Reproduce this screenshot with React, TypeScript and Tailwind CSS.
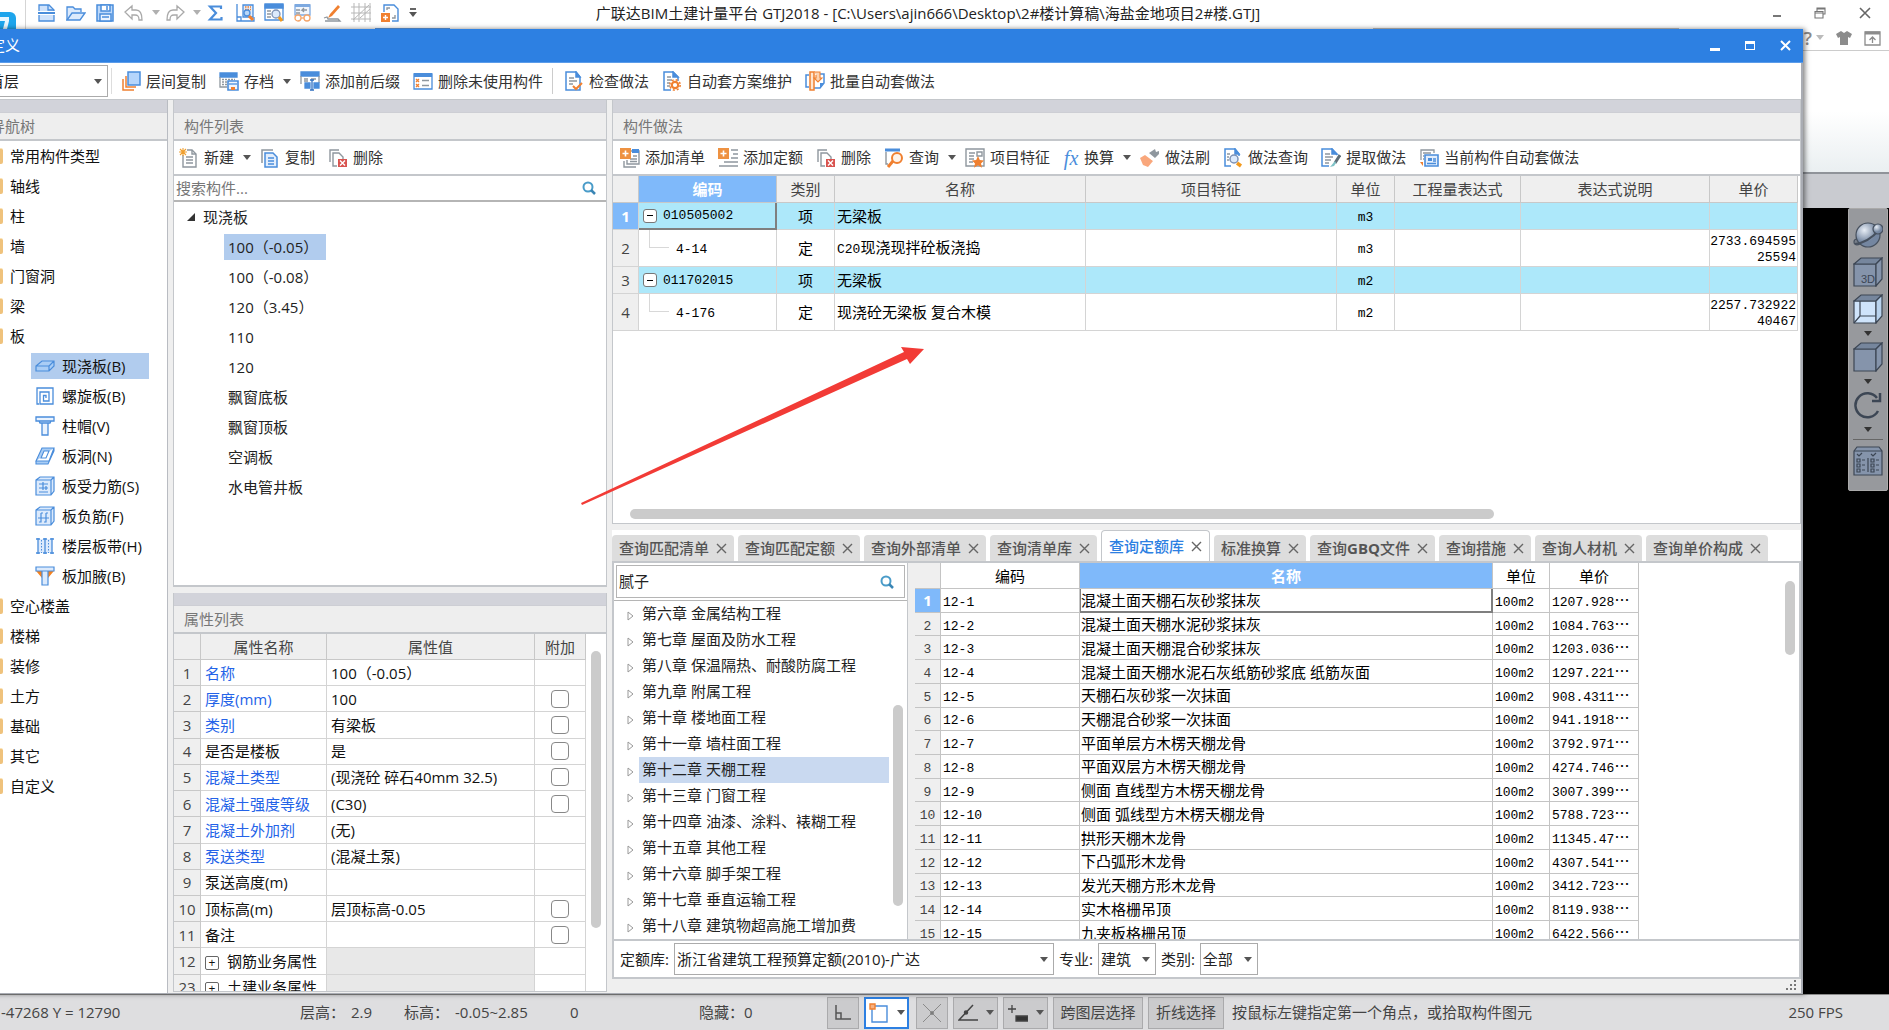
import { type ReactNode } from 'react'
import clsx from 'clsx'

const B = '#4a8ddb'
const O = '#f08030'
const G = '#8f979e'

// toolbar drawings, all on a 20x20 grid
const icons: Record<string, ReactNode> = {
  newFile: (
    <g fill="#cfe2fb" stroke={B} strokeWidth="1.3">
      <path d="M2 8V2h10l5 5v1" />
      <path d="M2 12v6h15v-6" />
      <path d="M1 10h17" strokeWidth="2" />
      <path d="M11 2v5h6" fill="none" />
    </g>
  ),
  open: (
    <g fill="#dceafc" stroke={B} strokeWidth="1.3">
      <path d="M1 17V4h6l2 2h6v3" />
      <path d="M1 17l5-7h13l-5 7z" />
    </g>
  ),
  save: (
    <g fill="#bcd8fa" stroke={B} strokeWidth="1.5">
      <path d="M2 2h16v16H2z" />
      <path d="M6 2h9v6H6z" fill="#fff" />
      <path d="M5 11h11v7H5z" fill="#eaf3fe" />
      <path d="M7 14h7M12 3v4" />
    </g>
  ),
  undo: <path d="M8 3v4h4c4 0 6 3 6 10h-3c0-4-1-5-4-5H8v4L1 9z" fill="#fff" stroke="#a9a9a9" strokeWidth="1.3" />,
  redo: <path d="M12 3v4H8c-4 0-6 3-6 10h3c0-4 1-5 4-5h3v4l7-7z" fill="#fff" stroke="#a9a9a9" strokeWidth="1.3" />,
  sigma: <path d="M15 6V3.500H4L10 10l-6 6.500h11.500V14" fill="none" stroke={B} strokeWidth="2.200" />,
  calc: (
    <g fill="none" stroke={B} strokeWidth="1.3">
      <path d="M2 1v17h17v-4M2 14h4v4" />
      <path d="M8 2h10v12H8z" fill="#e3eefc" />
      <path d="M10 4h6M10 6.500h6" stroke={O} strokeDasharray="1.500 1" />
      <circle cx="12" cy="10" r="3" fill="#b9d7f8" />
      <path d="M14 13l4 4" stroke={O} strokeWidth="3" />
    </g>
  ),
  findTable: (
    <g fill="none" stroke={B} strokeWidth="1.3">
      <path d="M1 2h18v15H1z" fill="#fff" />
      <path d="M1 1h18v4H1z" fill={B} />
      <path d="M3 8h4M3 11h4M3 14h4" stroke={G} />
      <circle cx="12" cy="11" r="4" fill="#dceafc" stroke="#7d92b5" />
      <path d="M15 14l3 4" stroke="#f39a1e" strokeWidth="3" />
    </g>
  ),
  glasses: (
    <g fill="none" stroke="#7da9e0" strokeWidth="1.3">
      <path d="M2 2h15v10H2z" fill="#f1f6fd" />
      <path d="M2 2.500h15" strokeWidth="3" />
      <path d="M3 7h4M3 10h4M14 7h-5l2-2M9 7l2 2" stroke={G} />
      <circle cx="5" cy="15" r="3" stroke="#f4a56a" fill="#fff" />
      <circle cx="14" cy="15" r="3" stroke="#f4a56a" fill="#fff" />
      <path d="M8 15h3" stroke="#f4a56a" />
    </g>
  ),
  pencil: (
    <g>
      <path d="M16 2l2 2-8 9-4 2 2-4z" fill={O} />
      <path d="M2 15l3-1 1 2h10l2 2H3" fill="none" stroke={G} strokeWidth="1.300" />
    </g>
  ),
  gridAxes: (
    <path d="M3 0v19M8 0v19M14 0v19M19 0v19M0 4h20M0 10h20M0 16h20M2 17L18 2M9 15L19 6" fill="none" stroke="#b7b7b7" />
  ),
  addPage: (
    <g fill="none" stroke={B} strokeWidth="1.4">
      <path d="M4 9V2h10l4 4v12h-6" fill="#fff" />
      <path d="M7 7V5h3M15 12v3h-3" stroke={G} />
      <path d="M1 10h9v9H1z" fill={O} stroke="none" />
      <path d="M5.500 12v5M3 14.500h5" stroke="#fff" />
    </g>
  ),
  layers: (
    <g fill="none" strokeWidth="1.5">
      <path d="M2 8v11h11M5 5v11h10" stroke={O} />
      <path d="M7 1h12v13H7z" fill="#b5d5fb" stroke={B} />
    </g>
  ),
  archive: (
    <g fill="none" stroke={B} strokeWidth="1.3">
      <path d="M1 2h17v4H1z" fill={B} />
      <path d="M1 6v10h7" stroke={G} />
      <path d="M3 8.500h13M3 11h5M3 13.500h5" stroke={G} strokeDasharray="2 1" />
      <path d="M9 10h10v9H9z" fill="#eef5fe" strokeWidth="1.600" />
      <path d="M12 16h4v3h-4z" fill={O} stroke="none" />
      <path d="M10 13h8" />
    </g>
  ),
  prefix: (
    <g fill="none" stroke={B} strokeWidth="1.3">
      <path d="M1 1h18v4H1z" fill={B} />
      <path d="M1 5v8M19 5v7M4 8h4M11 8h5M4 10h4" stroke={G} />
      <path d="M5 12h5v5H5zM14 12h5v5h-5z" fill={B} />
      <path d="M12 9v10M10 9h4M10 19h4" stroke="#2f6fc0" />
    </g>
  ),
  unused: (
    <g fill="none" strokeWidth="1.3">
      <path d="M1 3h18v15H1z" fill="#fff" stroke={B} />
      <path d="M1 2h18v4H1z" fill={B} />
      <path d="M3 8l3 3M6 8l-3 3M3 13l3 3M6 13l-3 3" stroke={O} />
      <path d="M9 9.500h7M9 14.500h7" stroke={G} />
    </g>
  ),
  check: (
    <g fill="none" stroke={B} strokeWidth="1.5">
      <path d="M2 1h10l4 5v13H2z" fill="#fff" />
      <path d="M12 1v5h4z" fill={B} />
      <path d="M5 7h5M5 10h8M5 13h4" stroke={G} />
      <path d="M9 15l3 3 6-6" stroke={O} strokeWidth="2" />
    </g>
  ),
  gearPage: (
    <g fill="none" stroke={B} strokeWidth="1.5">
      <path d="M9 19H2V1h9l5 5v4" fill="#fff" />
      <path d="M11 1v5h5z" fill={B} />
      <path d="M5 6h4M5 9h5M5 12h3M5 15h3" stroke={G} />
      <circle cx="13" cy="14" r="3.200" stroke={O} strokeWidth="2.200" />
      <circle cx="13" cy="14" r="5.200" stroke={O} strokeDasharray="2 2.100" />
    </g>
  ),
  batch: (
    <g fill="none" strokeWidth="1.5">
      <path d="M4 4H1v12h3M15 3h4v9l-4 5H9" stroke={B} />
      <path d="M5 1h4v18H5z" fill="#fde6d2" stroke={O} />
      <path d="M9 1h6v6h2l-4 4-4-4h2V4" fill="#fbd3b2" stroke={O} strokeWidth="1.100" />
      <path d="M15 17v-5h4z" fill={B} />
    </g>
  ),
  create: (
    <g fill="none" stroke={G} strokeWidth="1.4">
      <path d="M4 7v12h13V6l-4-4H8" fill="#fff" />
      <path d="M13 2v4h4M7 9h7M7 12h7M7 15h7" />
      <path d="M1 1l6 6M7 1L1 7M4 0v8M0 4h8" stroke="#f0a030" strokeWidth="1.100" />
    </g>
  ),
  copy: (
    <g fill="none" strokeWidth="1.5">
      <path d="M2 15V2h11" stroke={G} />
      <path d="M5 5h8l4 4v10H5z" fill="#e3eefc" stroke={B} />
      <path d="M8 10h6M8 13h6M8 16h6" stroke={B} />
    </g>
  ),
  remove: (
    <g fill="none" stroke={G} strokeWidth="1.4">
      <path d="M2 14V2h9" />
      <path d="M9 18H5V5h6l4 4v2" fill="#fff" />
      <path d="M10 11h9v8h-9z" fill="#d9534f" stroke="none" />
      <path d="M12 12.500l5 5M17 12.500l-5 5" stroke="#fff" />
    </g>
  ),
  addList: (
    <g fill="none" stroke={G} strokeWidth="1.4">
      <path d="M10 3h9v13H7v-4" />
      <path d="M12 3h7" stroke={B} strokeWidth="4" />
      <path d="M13 8h4M10 11h7M10 13.500h7M4 13v6h12" />
      <path d="M0 0h11v11H0z" fill="#ee9242" stroke="none" />
      <path d="M5.500 2.500v6M2.500 5.500h6" stroke="#fff" strokeWidth="1.600" />
    </g>
  ),
  addQuota: (
    <g fill="none" stroke={G} strokeWidth="1.5">
      <path d="M13 2h7M15 6h5M13 10h7M6 14h14M1 18h19" />
      <path d="M0 0h11v11H0z" fill="#ee9242" stroke="none" />
      <path d="M5.500 2.500v6M2.500 5.500h6" stroke="#fff" strokeWidth="1.600" />
    </g>
  ),
  query: (
    <g fill="none">
      <path d="M1 2h15" stroke={B} strokeWidth="3" />
      <path d="M2 4v12h2" stroke={G} strokeWidth="1.400" />
      <circle cx="13" cy="10" r="5" stroke={O} strokeWidth="2" fill="#fff4ea" />
      <path d="M9 13l-5 6" stroke={O} strokeWidth="3" />
    </g>
  ),
  feature: (
    <g fill="none" stroke={G} strokeWidth="1.4">
      <path d="M1 1h18v17H1z" fill="#fff" />
      <path d="M4 5h6M4 8h5M4 11h5M4 14h4M12 4h5v4h-5z" />
      <path d="M13 8l1.800 4 4.200.4-3 3 1 4.300-4-2.400-4 2.400 1-4.300-3-3 4.200-.4z" fill={O} stroke="none" />
    </g>
  ),
  brush: (
    <g>
      <path d="M0 10l5-3 8 6-5 6-5-2z" fill="#f9a77c" />
      <path d="M9 5l6 5 4-4V3l-3 1-1-3z" fill={G} />
      <path d="M6 6l7 6" stroke="#fff" strokeWidth="1.300" />
    </g>
  ),
  findPage: (
    <g fill="none" stroke={B} strokeWidth="1.5">
      <path d="M16 8V6l-4-5H2v17h6" fill="#fff" />
      <path d="M12 1v5h4z" fill={B} />
      <circle cx="11" cy="11" r="4" fill="#dceafc" stroke="#7d92b5" />
      <path d="M4 6h3M4 9h2M4 12h2" stroke={G} />
      <path d="M14 15l4 3" stroke="#f39a1e" strokeWidth="3.500" />
    </g>
  ),
  extract: (
    <g fill="none" stroke={B} strokeWidth="1.5">
      <path d="M8 18H1V1h10l5 6" fill="#fff" />
      <path d="M11 1v5h5z" fill={B} />
      <path d="M4 6h5M4 9h8M4 12h6M4 15h4" stroke={G} />
      <path d="M19 7l-5 8" stroke="#5e6e78" strokeWidth="3" />
      <path d="M14 13l-5 6 4-1 2-3z" fill="#7fc2c7" stroke="none" />
    </g>
  ),
  current: (
    <g fill="none" stroke={G} strokeWidth="1.3">
      <path d="M2 12V2h13v3M4 5h8M4 8h1M4 11h1" />
      <path d="M1 14h3v4z" fill={O} stroke="none" />
      <path d="M6 7h13v11H6z" fill="#e3eefc" stroke={B} strokeWidth="1.600" />
      <path d="M9 10h4v3H9z" fill={B} stroke="none" />
      <path d="M14 11h3M14 13h3M8 15.500h9" stroke={B} />
    </g>
  ),
  slab: <path d="M1 10l6-5h12v5l-5 5H1zM1 10h13v5M14 10l5-5" fill="#a9cdf5" stroke={B} strokeWidth="1.200" />,
  spiral: <path d="M4 18H2V2h16v16H5V6h9v9H8.500V9.500H11V12" fill="none" stroke={B} strokeWidth="1.300" />,
  cap: <path d="M1 1h18v4H1zM4 5h12l-1 2H5zM7 7h6v12H7z" fill="#eaf3fe" stroke={B} strokeWidth="1.300" />,
  hole: (
    <g stroke={B} strokeWidth="1.1">
      <path d="M7 2h12l-5 13H1zM1 15v3h12l6-13V2" fill="#a9cdf5" />
      <path d="M9 5h5l-3 7H6z" fill="#fff" />
    </g>
  ),
  rebarS: (
    <g fill="#dceafc" stroke={B} strokeWidth="1.2">
      <path d="M1 4l4-3h14v14l-3 4H1zM1 4h15v15M16 4l3-3" />
      <path d="M4 8h9M4 12h9M4 16h9M8 6v4M8 10v4M11 10v4" />
    </g>
  ),
  rebarF: (
    <g fill="#dceafc" stroke={B} strokeWidth="1.2">
      <path d="M1 4l4-3h14v14l-3 4H1zM1 4h15v15M16 4l3-3" />
      <path d="M6 7v9H4M11 7v9H9M3 12h11M6 7h2M11 7h2" fill="none" />
    </g>
  ),
  strip: (
    <g>
      <path d="M3 3h14v14H3z" fill="#dceafc" />
      <path d="M3 2v16M10 2v16M17 2v16M1 3h4M1 17h4M8 3h4M8 17h4M15 3h4M15 17h4" stroke={B} strokeWidth="1.300" />
      <path d="M6.500 4v13M13.500 4v13" stroke={B} strokeDasharray="1.500 1.500" />
    </g>
  ),
  haunch: (
    <g strokeWidth="1.2">
      <path d="M2 5l5 6V5zM18 5l-5 6V5z" fill="#f58220" stroke="#f58220" />
      <path d="M1 1h18v4H1zM7 5h6v14H7z" fill="#dceafc" stroke={B} />
    </g>
  ),
}

const Icon = ({ name, className = 'size-5' }: { name: string; className?: string }) => (
  <svg viewBox="0 0 20 20" className={clsx('shrink-0', className)} aria-hidden="true">
    {icons[name]}
  </svg>
)

const Caret = ({ className = 'text-[#555]' }: { className?: string }) => (
  <svg viewBox="0 0 8 5" className={clsx('h-[5px] w-2 shrink-0', className)} aria-hidden="true">
    <path d="M0 0h8L4 5z" fill="currentColor" />
  </svg>
)

const SearchIcon = () => (
  <svg viewBox="0 0 14 14" className="size-3.5 shrink-0" aria-hidden="true">
    <circle cx="6" cy="6" r="4.500" fill="none" stroke="#4a9cc9" strokeWidth="2" />
    <path d="M9 9l4 4" stroke="#3a86b5" strokeWidth="2.500" />
  </svg>
)

const ToolButton = ({ icon, label, menu }: { icon: string; label: string; menu?: boolean }) => (
  <button type="button" className={clsx('flex items-center gap-[5px] whitespace-nowrap', menu && '-mr-1')}>
    {icon === 'fx' ? (
      <span className="w-4 font-['Liberation_Serif',serif] text-[20px] leading-5 text-[#4a8ddb] italic">fx</span>
    ) : (
      <Icon name={icon} />
    )}
    {label}
    {menu && <span className="ml-1"><Caret /></span>}
  </button>
)

type SelectProps = { id: string; label: string; value: string; className: string; pad?: string }

const Select = ({ id, label, value, className, pad = 'pl-0.5' }: SelectProps) => (
  <div className={clsx('relative', className)}>
    <select
      id={id}
      aria-label={label}
      className={clsx('h-full w-full appearance-none border border-[#ababab] bg-white text-[15px] text-[#222] outline-none', pad)}
    >
      <option>{value}</option>
    </select>
    <span className="pointer-events-none absolute inset-y-0 right-1.5 flex items-center">
      <Caret />
    </span>
  </div>
)

const PanelHeader = ({ title }: { title: string }) => (
  <div className="shrink-0">
    <div className="h-[13px] border-b border-[#cdced4] bg-[#d2d3da]" />
    <h2 className="flex h-7 items-center border-b-2 border-[#c4c7cb] bg-[#eeeeee] pl-2.5 text-[15px] text-[#777]">{title}</h2>
  </div>
)

const quickIcons = ['newFile', 'open', 'save', 'undo', 'redo', 'sigma', 'calc', 'findTable', 'glasses', 'pencil', 'gridAxes', 'addPage']

const TitleBar = () => (
  <header className="relative flex h-[29px] shrink-0 items-center bg-white">
    <div className="h-[17px] w-4 shrink-0 self-end overflow-hidden rounded-tr-md bg-[#1ea5ec]">
      <svg viewBox="0 0 16 17" className="h-full w-full" aria-hidden="true">
        <path d="M0 5h9v4L7 17H3l2-8H0z" fill="#e8f7ff" />
      </svg>
    </div>
    <div className="mr-[11px] ml-[9px] h-full w-px bg-[#d5d5d5]" />
    <div className="-mt-1 flex items-center gap-[9px]">
      {quickIcons.map((name) => (
        <button key={name} type="button" aria-label={name} className="flex items-center gap-2">
          <Icon name={name} />
          {(name === 'undo' || name === 'redo') && <Caret className="-mr-1 text-[#b0b0b0]" />}
        </button>
      ))}
      <button type="button" aria-label="自定义快速访问" className="flex flex-col items-center gap-0.5">
        <span className="h-0.5 w-1.5 bg-[#666]" />
        <Caret />
      </button>
    </div>
    <h1 className="absolute inset-x-0 top-0 text-center text-[15px] leading-[27px] text-[#222]">
      <span className="mr-[33px]">{'广联达BIM土建计量平台 GTJ2018 - [C:\\Users\\ajin666\\Desktop\\2#楼计算稿\\海盐金地项目2#楼.GTJ]'}</span>
    </h1>
    <div className="absolute bottom-0 left-[375px] h-px w-[75px] bg-[#5b9cea]" />
    <div className="absolute right-[210px] bottom-0 h-px w-[306px] bg-[#c0c0c0]" />
    <div className="mr-[18px] mb-1 ml-auto flex items-center gap-[33px] text-[#555]">
      <button type="button" aria-label="最小化" className="mt-1.5 h-0.5 w-2 bg-[#777]" />
      <button type="button" aria-label="还原">
        <svg viewBox="0 0 12 12" className="size-3" fill="none" stroke="#777" strokeWidth="1.100">
          <path d="M3 4V1h8v6H9M1 4.500h8V11H1zM1 6h8M3 2h8" />
        </svg>
      </button>
      <button type="button" aria-label="关闭">
        <svg viewBox="0 0 12 12" className="size-3" stroke="#666" strokeWidth="1.600">
          <path d="M1 1l10 10M11 1L1 11" />
        </svg>
      </button>
    </div>
  </header>
)

const slabTypes = [
  ['slab', '现浇板(B)'],
  ['spiral', '螺旋板(B)'],
  ['cap', '柱帽(V)'],
  ['hole', '板洞(N)'],
  ['rebarS', '板受力筋(S)'],
  ['rebarF', '板负筋(F)'],
  ['strip', '楼层板带(H)'],
  ['haunch', '板加腋(B)'],
]

const Folder = ({ label }: { label: string }) => (
  <li className="flex h-[30px] items-center gap-[7px] pl-2">
    <span className="h-4 w-[15px] rounded-xs border-t border-[#fbe3b5] bg-[#efc27c]" />
    {label}
  </li>
)

const NavTree = () => (
  <nav className="flex w-[188px] shrink-0 flex-col border-r border-[#b9bcc2] bg-white">
    <PanelHeader title="导航树" />
    <ul className="min-h-0 flex-1 overflow-hidden text-[15px] text-[#111]">
      {['常用构件类型', '轴线', '柱', '墙', '门窗洞', '梁', '板'].map((label) => (
        <Folder key={label} label={label} />
      ))}
      {slabTypes.map(([icon, label], i) => (
        <li key={label} className="flex h-[30px] items-center pl-[51px]">
          <button
            type="button"
            className={clsx('flex h-[26px] w-[118px] items-center gap-[7px] pl-1 text-left whitespace-nowrap', i === 0 && 'bg-[#b1ccee]')}
          >
            <Icon name={icon} />
            {label}
          </button>
        </li>
      ))}
      {['空心楼盖', '楼梯', '装修', '土方', '基础', '其它', '自定义'].map((label) => (
        <Folder key={label} label={label} />
      ))}
    </ul>
  </nav>
)

const components = ['100（-0.05）', '100（-0.08）', '120（3.45）', '110', '120', '飘窗底板', '飘窗顶板', '空调板', '水电管井板']

const ComponentList = () => (
  <section className="flex min-h-0 flex-1 flex-col border-x border-b-2 border-[#c4c7cb] bg-white">
    <PanelHeader title="构件列表" />
    <div className="flex h-[35px] shrink-0 items-center gap-[13px] border-b-2 border-[#c4c7cb] pl-[5px] text-[15px] text-[#333]">
      <ToolButton icon="create" label="新建" menu />
      <ToolButton icon="copy" label="复制" />
      <ToolButton icon="remove" label="删除" />
    </div>
    <div className="flex h-[26px] shrink-0 items-center border-b-2 border-[#b5b5b5] pr-2.5 pl-0.5">
      <input aria-label="搜索构件" placeholder="搜索构件..." className="min-w-0 flex-1 text-[15px] outline-none placeholder:text-[#777]" />
      <SearchIcon />
    </div>
    <div className="text-[15px] text-[#222]">
      <div className="flex h-[30px] items-center gap-2 pl-[13px]">
        <svg viewBox="0 0 8 8" className="size-2" aria-hidden="true">
          <path d="M8 0v8H0z" fill="#333" />
        </svg>
        现浇板
      </div>
      <ul>
        {components.map((name, i) => (
          <li key={name + i} className="flex h-[30px] items-center pl-[50px]">
            <span className={clsx('h-[26px] pr-2 pl-1 leading-[26px]', i === 0 && 'bg-[#b1ccee]')}>{name}</span>
          </li>
        ))}
      </ul>
    </div>
  </section>
)

type Prop = { n: number; name: string; value?: string; blue?: boolean; box?: boolean; group?: boolean }

const props: Prop[] = [
  { n: 1, name: '名称', value: '100（-0.05）', blue: true },
  { n: 2, name: '厚度(mm)', value: '100', blue: true, box: true },
  { n: 3, name: '类别', value: '有梁板', blue: true, box: true },
  { n: 4, name: '是否是楼板', value: '是', box: true },
  { n: 5, name: '混凝土类型', value: '(现浇砼 碎石40mm 32.5)', blue: true, box: true },
  { n: 6, name: '混凝土强度等级', value: '(C30)', blue: true, box: true },
  { n: 7, name: '混凝土外加剂', value: '(无)', blue: true },
  { n: 8, name: '泵送类型', value: '(混凝土泵)', blue: true },
  { n: 9, name: '泵送高度(m)' },
  { n: 10, name: '顶标高(m)', value: '层顶标高-0.05', box: true },
  { n: 11, name: '备注', box: true },
  { n: 12, name: '钢筋业务属性', group: true },
  { n: 23, name: '土建业务属性', group: true },
]

const PropertyList = () => (
  <section className="flex h-[399px] shrink-0 flex-col border-x border-b border-[#c4c7cb] bg-white">
    <PanelHeader title="属性列表" />
    <div className="flex min-h-0 flex-1 overflow-hidden">
      <table className="h-[367px] min-w-0 flex-1 table-fixed border-separate border-spacing-0 text-[15px] leading-5 text-[#111]">
        <colgroup>
          <col className="w-[27px]" />
          <col className="w-[126px]" />
          <col />
          <col className="w-[51px]" />
        </colgroup>
        <thead>
          <tr className="h-[26px] text-[#444]">
            {['', '属性名称', '属性值', '附加'].map((h) => (
              <th key={h} className="border-r border-b border-[#c8c8c8] bg-[#efefef] p-0 font-normal">{h}</th>
            ))}
          </tr>
        </thead>
        <tbody>
          {props.map((p) => (
            <tr key={p.n} className="h-[26px]">
              <td className="border-r border-b border-[#c8c8c8] bg-[#efefef] p-0 text-center text-[#444]">{p.n}</td>
              <td className={clsx('border-r border-b border-[#d4d4d4] py-0 pr-0 pl-1 whitespace-nowrap', p.blue && 'text-[#2463e8]')}>
                {p.group && (
                  <button
                    type="button"
                    aria-label={`展开${p.name}`}
                    className="mr-2 inline-flex size-3.5 items-center justify-center rounded-xs border border-[#666] align-middle text-[12px] leading-none"
                  >
                    +
                  </button>
                )}
                {p.name}
              </td>
              <td className={clsx('border-r border-b border-[#d4d4d4] py-0 pr-0 pl-1', p.group && 'bg-[#e8e8e8]')}>{p.value}</td>
              <td className="border-r border-b border-[#d4d4d4] p-0 text-center">
                {p.box && (
                  <input
                    type="checkbox"
                    aria-label={`附加${p.name}`}
                    className="mx-auto block size-[18px] appearance-none rounded-sm border border-[#888] bg-white"
                  />
                )}
              </td>
            </tr>
          ))}
        </tbody>
      </table>
      <div className="w-5 shrink-0 px-[5px] pt-[17px]">
        <div className="h-[277px] rounded-full bg-[#cbcbcb]" />
      </div>
    </div>
  </section>
)

const Mono = ({ children }: { children: ReactNode }) => (
  <span className="font-['Liberation_Mono',monospace] text-[13px] leading-none">{children}</span>
)

const methods = [
  { code: '010505002', kind: '项', name: '无梁板', unit: 'm3', price: [] },
  { code: '4-14', kind: '定', prefix: 'C20', name: '现浇现拌砼板浇捣', unit: 'm3', price: ['2733.694595', '25594'] },
  { code: '011702015', kind: '项', name: '无梁板', unit: 'm2', price: [] },
  { code: '4-176', kind: '定', name: '现浇砼无梁板 复合木模', unit: 'm2', price: ['2257.732922', '40467'] },
]

const MethodTable = () => (
  <table className="w-full table-fixed border-separate border-spacing-0 text-[15px] leading-[15px] text-black">
    <colgroup>
      <col className="w-[26px]" />
      <col className="w-[138px]" />
      <col className="w-[58px]" />
      <col />
      <col />
      <col className="w-[58px]" />
      <col className="w-[126px]" />
      <col className="w-[189px]" />
      <col className="w-[88px]" />
    </colgroup>
    <thead>
      <tr className="h-[27px] text-[#444]">
        {['', '编码', '类别', '名称', '项目特征', '单位', '工程量表达式', '表达式说明', '单价'].map((h) => (
          <th
            key={h}
            className={clsx(
              'border-r border-b border-[#c8c8c8] p-0',
              h === '编码' ? 'bg-[#7fb9fa] font-bold text-white' : 'bg-[#efefef] font-normal',
            )}
          >
            {h}
          </th>
        ))}
      </tr>
    </thead>
    <tbody>
      {methods.map((m, i) => {
        const parent = m.kind === '项'
        return (
          <tr
            key={m.code}
            className={clsx(
              '*:border-r *:border-b *:border-[#d4d4d4] *:py-0',
              parent ? 'h-[27px] *:bg-[#ade8fa]' : 'h-[37px]',
            )}
          >
            <td className={clsx('px-0 text-center', i === 0 ? 'bg-[#7fb9fa]! font-bold text-white' : 'bg-[#efefef]! text-[#444]')}>
              {i + 1}
            </td>
            <td className={clsx('relative px-0', i === 0 && 'border-r-2! border-b-2! border-[#7f7f7f]!')}>
              {parent ? (
                <div className="flex items-center gap-1.5 pl-1">
                  <button
                    type="button"
                    aria-label={`收起${m.code}`}
                    className="flex size-[14px] items-center justify-center rounded-[3px] border border-[#777] bg-white"
                  >
                    <span className="h-px w-1.5 bg-black" />
                  </button>
                  <Mono>{m.code}</Mono>
                </div>
              ) : (
                <div className="pl-[37px]">
                  <span className="absolute top-0 left-2.5 h-[18px] w-5 border-b border-l border-[#d8d8d8]" />
                  <Mono>{m.code}</Mono>
                </div>
              )}
            </td>
            <td className="px-0 text-center">{m.kind}</td>
            <td className="pr-0 pl-0.5">
              {m.prefix && <Mono>{m.prefix}</Mono>}
              {m.name}
            </td>
            <td />
            <td className="px-0 text-center">
              <Mono>{m.unit}</Mono>
            </td>
            <td />
            <td />
            <td className="pr-px pl-0 text-right">
              {m.price.map((line) => (
                <div key={line}>
                  <Mono>{line}</Mono>
                </div>
              ))}
            </td>
          </tr>
        )
      })}
    </tbody>
  </table>
)

const MethodPanel = () => (
  <section className="flex min-h-0 flex-1 flex-col border-x border-b border-[#c4c7cb] bg-white">
    <PanelHeader title="构件做法" />
    <div className="flex h-[35px] shrink-0 items-center gap-[13px] border-b-2 border-[#c4c7cb] pl-[7px] text-[15px] text-[#333]">
      <ToolButton icon="addList" label="添加清单" />
      <ToolButton icon="addQuota" label="添加定额" />
      <ToolButton icon="remove" label="删除" />
      <ToolButton icon="query" label="查询" menu />
      <ToolButton icon="feature" label="项目特征" />
      <ToolButton icon="fx" label="换算" menu />
      <ToolButton icon="brush" label="做法刷" />
      <ToolButton icon="findPage" label="做法查询" />
      <ToolButton icon="extract" label="提取做法" />
      <ToolButton icon="current" label="当前构件自动套做法" />
    </div>
    <div className="pr-0.5">
      <MethodTable />
    </div>
    <div className="mt-auto mb-1 pr-[306px] pl-[17px]">
      <div className="h-2.5 rounded-full bg-[#cbcbcb]" />
    </div>
  </section>
)

const tabs = ['查询匹配清单', '查询匹配定额', '查询外部清单', '查询清单库', '查询定额库', '标准换算', '查询GBQ文件', '查询措施', '查询人材机', '查询单价构成']

const chapters = [
  '第六章 金属结构工程',
  '第七章 屋面及防水工程',
  '第八章 保温隔热、耐酸防腐工程',
  '第九章 附属工程',
  '第十章 楼地面工程',
  '第十一章 墙柱面工程',
  '第十二章 天棚工程',
  '第十三章 门窗工程',
  '第十四章 油漆、涂料、裱糊工程',
  '第十五章 其他工程',
  '第十六章 脚手架工程',
  '第十七章 垂直运输工程',
  '第十八章 建筑物超高施工增加费',
]

const quotas = [
  ['混凝土面天棚石灰砂浆抹灰', '1207.928'],
  ['混凝土面天棚水泥砂浆抹灰', '1084.763'],
  ['混凝土面天棚混合砂浆抹灰', '1203.036'],
  ['混凝土面天棚水泥石灰纸筋砂浆底 纸筋灰面', '1297.221'],
  ['天棚石灰砂浆一次抹面', '908.4311'],
  ['天棚混合砂浆一次抹面', '941.1918'],
  ['平面单层方木楞天棚龙骨', '3792.971'],
  ['平面双层方木楞天棚龙骨', '4274.746'],
  ['侧面 直线型方木楞天棚龙骨', '3007.399'],
  ['侧面 弧线型方木楞天棚龙骨', '5788.723'],
  ['拱形天棚木龙骨', '11345.47'],
  ['下凸弧形木龙骨', '4307.541'],
  ['发光天棚方形木龙骨', '3412.723'],
  ['实木格栅吊顶', '8119.938'],
  ['九夹板格栅吊顶', '6422.566'],
]

const QuotaTable = () => (
  <table className="h-[382px] w-full table-fixed border-separate border-spacing-0 text-[15px] leading-4 text-black">
    <colgroup>
      <col className="w-[26px]" />
      <col className="w-[139px]" />
      <col />
      <col className="w-[57px]" />
      <col className="w-[89px]" />
    </colgroup>
    <thead>
      <tr className="h-[26px]">
        {['', '编码', '名称', '单位', '单价'].map((h) => (
          <th
            key={h}
            className={clsx(
              'border-r border-b border-[#c4c4c4] p-0',
              h === '名称' ? 'bg-[#7fb9fa] font-bold text-white' : 'font-normal',
              h === '' && 'bg-[#efefef]',
            )}
          >
            {h}
          </th>
        ))}
      </tr>
    </thead>
    <tbody>
      {quotas.map(([name, price], i) => (
        <tr key={name} className="h-[23px] *:border-r *:border-b *:border-[#c4c4c4] *:py-0">
          <td className={clsx('px-0 text-center', i === 0 ? 'bg-[#7fb9fa] font-bold text-white' : 'bg-[#efefef] text-[#444]')}>
            {i === 0 ? '1' : <Mono>{i + 1}</Mono>}
          </td>
          <td className="pr-0 pl-0.5">
            <Mono>12-{i + 1}</Mono>
          </td>
          <td className={clsx('pr-0', i === 0 ? 'border-r-2! border-b-2! border-l border-[#7f7f7f]!' : 'pl-px')}>{name}</td>
          <td className="pr-0 pl-0.5">
            <Mono>100m2</Mono>
          </td>
          <td className="pr-0 pl-0.5 whitespace-nowrap">
            <Mono>{price}</Mono>⋯
          </td>
        </tr>
      ))}
    </tbody>
  </table>
)

const QueryPanel = () => (
  <section className="flex h-[463px] shrink-0 flex-col">
    <div role="tablist" className="flex h-[31px] shrink-0 items-end gap-1 bg-white">
      {tabs.map((t) => {
        const active = t === '查询定额库'
        return (
          <div
            key={t}
            className={clsx(
              'flex items-center gap-[7px] rounded-t-sm px-[7px] text-[15px] font-medium whitespace-nowrap',
              active ? 'h-[31px] border border-b-0 border-[#c4c7cb] bg-white text-[#2d80e2]' : 'h-[26px] bg-[#dddddd] text-[#555]',
            )}
          >
            <button type="button" role="tab" aria-selected={active}>
              {t === '查询GBQ文件' ? <>查询<b>GBQ</b>文件</> : t}
            </button>
            <button type="button" aria-label={`关闭${t}`}>
              <svg viewBox="0 0 11 11" className="size-[11px]" stroke="#666" strokeWidth="1.400">
                <path d="M1 1l9 9M10 1l-9 9" />
              </svg>
            </button>
          </div>
        )
      })}
    </div>
    <div className="flex min-h-0 flex-1 flex-col border-2 border-[#c4c7cb] bg-white">
      <div className="flex min-h-0 flex-1 border-b-2 border-[#c4c7cb]">
        <div className="flex w-[294px] shrink-0 flex-col border-r border-[#c4c7cb]">
          <div className="m-0.5 flex h-[33px] shrink-0 items-center border border-[#b5b5b5] pr-2.5 pl-0.5">
            <input aria-label="查询定额" defaultValue="腻子" className="min-w-0 flex-1 text-[15px] text-[#222] outline-none" />
            <SearchIcon />
          </div>
          <div className="flex min-h-0 flex-1 border-t border-[#b5b5b5]">
            <ul className="flex flex-1 flex-col text-[15px] text-[#222]">
              {chapters.map((c, i) => (
                <li key={c} className="flex flex-1 items-center pl-[13px]">
                  <svg viewBox="0 0 7 10" className="mt-1 mr-[5px] h-2.5 w-[7px]" fill="#fff" stroke="#999" aria-hidden="true">
                    <path d="M1 1l5 4-5 4z" />
                  </svg>
                  <span className={clsx('flex-1 self-stretch pl-[3px] leading-[25px]', i === 6 && 'bg-[#c9d9f0]')}>{c}</span>
                </li>
              ))}
            </ul>
            <div className="w-[18px] shrink-0 px-1 pt-[104px]">
              <div className="h-[201px] rounded-full bg-[#cbcbcb]" />
            </div>
          </div>
        </div>
        <div className="w-[7px] shrink-0 bg-[#efefef]" />
        <div className="min-w-0 flex-1 overflow-hidden">
          <QuotaTable />
        </div>
        <div className="w-[160px] shrink-0 pt-[18px] pr-1">
          <div className="ml-auto h-[74px] w-2.5 rounded-full bg-[#cbcbcb]" />
        </div>
      </div>
      <div className="flex h-9 shrink-0 items-center gap-[5px] pl-1.5 text-[15px] text-[#222]">
        <label htmlFor="library">定额库:</label>
        <Select id="library" label="定额库" value="浙江省建筑工程预算定额(2010)-广达" className="h-8 w-[380px]" />
        <label htmlFor="major">专业:</label>
        <Select id="major" label="专业" value="建筑" className="h-8 w-[58px]" />
        <label htmlFor="kind">类别:</label>
        <Select id="kind" label="类别" value="全部" className="h-8 w-[58px]" />
      </div>
    </div>
    <div className="flex h-[14px] shrink-0 items-center justify-end pr-1">
      <svg viewBox="0 0 12 12" className="size-3" fill="#777" aria-hidden="true">
        <path d="M9 0h2v2H9zM5 4h2v2H5zM9 4h2v2H9zM1 8h2v2H1zM5 8h2v2H5zM9 8h2v2H9z" />
      </svg>
    </div>
  </section>
)

const DefinitionWindow = () => (
  <main className="relative z-10 -ml-5 flex min-w-0 flex-1 flex-col border-r-2 border-b border-[#a9acb3] bg-[#efefef] shadow-[2px_0_5px_rgba(0,0,0,0.5)]">
    <div className="-mr-0.5 flex h-[34px] shrink-0 items-center border-b border-[#5b9cea] bg-[#2d80e2] pr-3 pl-2.5 text-[15px] text-white">
      定义
      <div className="ml-auto flex items-center gap-[25px]">
        <button type="button" aria-label="最小化窗口" className="mt-2 h-[3px] w-2.5 bg-white" />
        <button type="button" aria-label="最大化窗口" className="h-[9px] w-2.5 border border-t-[3px] border-white" />
        <button type="button" aria-label="关闭窗口">
          <svg viewBox="0 0 11 11" className="size-[11px]" stroke="#fff" strokeWidth="2">
            <path d="M1 1l9 9M10 1l-9 9" />
          </svg>
        </button>
      </div>
    </div>
    <div className="flex h-[37px] shrink-0 items-center gap-[13px] border-b border-[#c4c7cb] bg-white text-[15px] text-[#333]">
      <Select id="floor" label="楼层" value="首层" className="h-8 w-32" pad="pl-2" />
      <span className="-mr-1 -ml-2.5 h-[26px] w-px bg-[#ddd]" />
      <ToolButton icon="layers" label="层间复制" />
      <ToolButton icon="archive" label="存档" menu />
      <ToolButton icon="prefix" label="添加前后缀" />
      <ToolButton icon="unused" label="删除未使用构件" />
      <span className="-mr-0.5 -ml-1 h-[26px] w-px bg-[#ccc]" />
      <ToolButton icon="check" label="检查做法" />
      <ToolButton icon="gearPage" label="自动套方案维护" />
      <ToolButton icon="batch" label="批量自动套做法" />
    </div>
    <div className="flex min-h-0 flex-1">
      <NavTree />
      <div className="mx-[5px] flex w-[434px] shrink-0 flex-col gap-1.5 pb-px">
        <ComponentList />
        <PropertyList />
      </div>
      <div className="flex min-w-0 flex-1 flex-col gap-1.5">
        <MethodPanel />
        <QueryPanel />
      </div>
    </div>
  </main>
)

const Cube = ({ glass, text }: { glass?: boolean; text?: string }) => (
  <svg viewBox="0 0 30 30" className="size-[30px]" stroke="#3c4654" strokeWidth="1.200" aria-hidden="true">
    <path d="M1 7h22v22H1z" fill={glass ? '#cfe4fb' : '#8594ab'} />
    <path d="M1 7l7-6h21l-6 6z" fill="#76869d" />
    <path d="M23 7l6-6v21l-6 7z" fill={glass ? '#b9d3ee' : '#8594ab'} />
    {glass && <path d="M7 7v15h16M7 22l-6 7" fill="none" />}
    {text && (
      <text x="8" y="26" fontSize="11" fill="#3c4654" stroke="none" fontFamily="Liberation Sans">
        {text}
      </text>
    )}
  </svg>
)

const ViewSidebar = () => (
  <aside className="flex w-[86px] shrink-0 flex-col bg-black">
    <div className="flex h-[22px] shrink-0 items-center justify-end gap-3 border-b border-[#ccc] bg-white pr-2 pb-1 text-[#8c8c8c]">
      <button type="button" aria-label="帮助" className="flex items-center gap-1 text-[18px] leading-none font-semibold">
        ?<Caret className="w-1.5 text-[#bbb]" />
      </button>
      <button type="button" aria-label="皮肤">
        <svg viewBox="0 0 16 16" className="size-4" fill="#8c8c8c">
          <path d="M5 1l3 2 3-2 5 3-2 4-2-1v8H4V7L2 8 0 4z" />
        </svg>
      </button>
      <button type="button" aria-label="折叠功能区">
        <svg viewBox="0 0 17 16" className="h-4 w-[17px]" fill="none" stroke="#8c8c8c" strokeWidth="1.300">
          <path d="M1 2h15v13H1zM8.500 13V7M5.500 10l3-3 3 3" />
          <path d="M1 3h15" strokeWidth="3" />
        </svg>
      </button>
    </div>
    <div className="h-[123px] shrink-0 border-b-2 border-[#8f9399] bg-linear-to-b from-white from-50% to-[#eaeff1]" />
    <div className="h-[34px] shrink-0 bg-[#c9cbd0]" />
    <div className="mr-px flex w-10 flex-col items-center self-end rounded-xs border border-[#aaa] bg-[#97999d] pt-3 pb-3.5">
      <button type="button" aria-label="动态观察">
        <svg viewBox="0 0 30 28" className="h-7 w-[30px]" stroke="#46505e" strokeWidth="1.200">
          <defs>
            <radialGradient id="ball" cx="0.350" cy="0.300">
              <stop offset="0" stopColor="#e8eef6" />
              <stop offset="1" stopColor="#7486a0" />
            </radialGradient>
          </defs>
          <circle cx="4" cy="21" r="3" fill="#777f8a" />
          <circle cx="15" cy="14" r="12" fill="url(#ball)" />
          <path d="M2 23C11 22 20 16 26 9" fill="none" strokeWidth="2" />
          <circle cx="25" cy="8" r="5" fill="url(#ball)" />
        </svg>
      </button>
      <button type="button" aria-label="三维" className="mt-2"><Cube text="3D" /></button>
      <button type="button" aria-label="线框显示" className="mt-[7px] flex flex-col items-center gap-[7px]"><Cube glass /><Caret className="text-[#333]" /></button>
      <button type="button" aria-label="实体显示" className="mt-[6px] flex flex-col items-center gap-[7px]"><Cube /><Caret className="text-[#333]" /></button>
      <button type="button" aria-label="旋转" className="mt-[7px] flex flex-col items-center gap-2">
        <svg viewBox="0 0 30 28" className="h-7 w-[30px]" fill="none" stroke="#3c4654" strokeWidth="2.500">
          <path d="M25 20A12 12 0 1 1 24 7" />
          <path d="M27 2v8h-8" />
        </svg>
        <Caret className="text-[#333]" />
      </button>
      <div className="mt-[7px] h-px w-[30px] bg-[#666]" />
      <button type="button" aria-label="显示设置" className="mt-1.5">
        <svg viewBox="0 0 30 30" className="size-[30px]" fill="none" stroke="#3c4654" strokeWidth="1.200">
          <path d="M1 5l3-4h22l3 4v24H1z" fill="#8594ab" />
          <path d="M1 5h28M15 12v14M4 8l2 2 3-3M18 8l2 2 3-3" />
          <path d="M4 13h3v3H4zM4 18h3v3H4zM4 23h3v3H4zM18 13h3v3h-3zM18 18h3v3h-3zM18 23h3v3h-3zM9 14h3M9 19h3M9 24h3M23 14h3M23 19h3M23 24h3" />
        </svg>
      </button>
    </div>
  </aside>
)

const modeButton = 'flex h-8 items-center justify-center border border-[#aaaaac] bg-[#cbcbcd]'

const StatusBar = () => (
  <footer className="flex h-9 shrink-0 items-center border-t border-[#8a8a8a] bg-[#dedee0] text-[15px] whitespace-nowrap text-[#444]">
    <div className="flex w-[300px] shrink-0">
      <span className="-ml-6">X = -47268 Y = 12790</span>
    </div>
    <span className="w-[51px]">层高：</span>
    <span className="w-[53px]">2.9</span>
    <span className="w-[51px]">标高：</span>
    <span className="w-[115px]">-0.05~2.85</span>
    <span className="w-[129px]">0</span>
    <span className="w-32">隐藏：0</span>
    <div className="flex items-center gap-[5px]">
      <button type="button" aria-label="正交" className={clsx(modeButton, 'w-8')}>
        <svg viewBox="0 0 18 18" className="size-[18px]" fill="none" stroke="#555" strokeWidth="1.500">
          <path d="M2 1v14h15M2 9h5v6" />
        </svg>
      </button>
      <button type="button" aria-label="对象捕捉" className="flex h-8 w-[45px] items-center justify-center gap-2 border-2 border-[#2d80e2] bg-white">
        <svg viewBox="0 0 20 20" className="size-5" fill="none" stroke={B} strokeWidth="1.400">
          <path d="M3 3h15v16H3z" />
          <path d="M1 1h5v5H1z" fill="#f6b183" stroke={O} />
        </svg>
        <Caret />
      </button>
      <button type="button" aria-label="交点" className={clsx(modeButton, 'ml-0.5 w-8')}>
        <svg viewBox="0 0 20 20" className="size-5" stroke="#8a8a8a">
          <path d="M1 1l18 18M19 1L1 19" />
          <circle cx="10" cy="10" r="1.500" fill="#777" />
        </svg>
      </button>
      <button type="button" aria-label="角度" className={clsx(modeButton, 'w-[45px] gap-2')}>
        <svg viewBox="0 0 20 18" className="h-[18px] w-5" fill="none" stroke="#444" strokeWidth="1.500">
          <path d="M15 1L1 16h19" />
          <circle cx="8" cy="8.500" r="1.500" fill="#444" />
        </svg>
        <Caret />
      </button>
      <button type="button" aria-label="偏移" className={clsx(modeButton, 'w-[45px] gap-2')}>
        <svg viewBox="0 0 20 18" className="h-[18px] w-5" stroke="#444" strokeWidth="1.300">
          <path d="M4 1v8M0 5h8" />
          <path d="M8 12h12v5H8z" fill="#333" />
        </svg>
        <Caret />
      </button>
      <button type="button" className={clsx(modeButton, 'w-[90px]')}>跨图层选择</button>
      <button type="button" className={clsx(modeButton, 'w-[76px]')}>折线选择</button>
    </div>
    <span className="ml-2">按鼠标左键指定第一个角点，或拾取构件图元</span>
    <span className="mr-[46px] ml-auto">250 FPS</span>
  </footer>
)

export default function App() {
  return (
    <div className="relative flex h-screen flex-col overflow-hidden bg-white font-['Open_Sans','Noto_Sans_CJK_SC',sans-serif]">
      <TitleBar />
      <div className="flex min-h-0 flex-1">
        <DefinitionWindow />
        <ViewSidebar />
      </div>
      <StatusBar />
      {/* red annotation arrow over the panels */}
      <svg viewBox="0 0 344 158" className="pointer-events-none absolute top-[347px] left-[581px] z-20 h-[158px] w-[344px]" aria-hidden="true">
        <path d="M0 156L323 5l-3-5 23 2-14 15-3-5L1 158z" fill="#f23b36" />
      </svg>
    </div>
  )
}
